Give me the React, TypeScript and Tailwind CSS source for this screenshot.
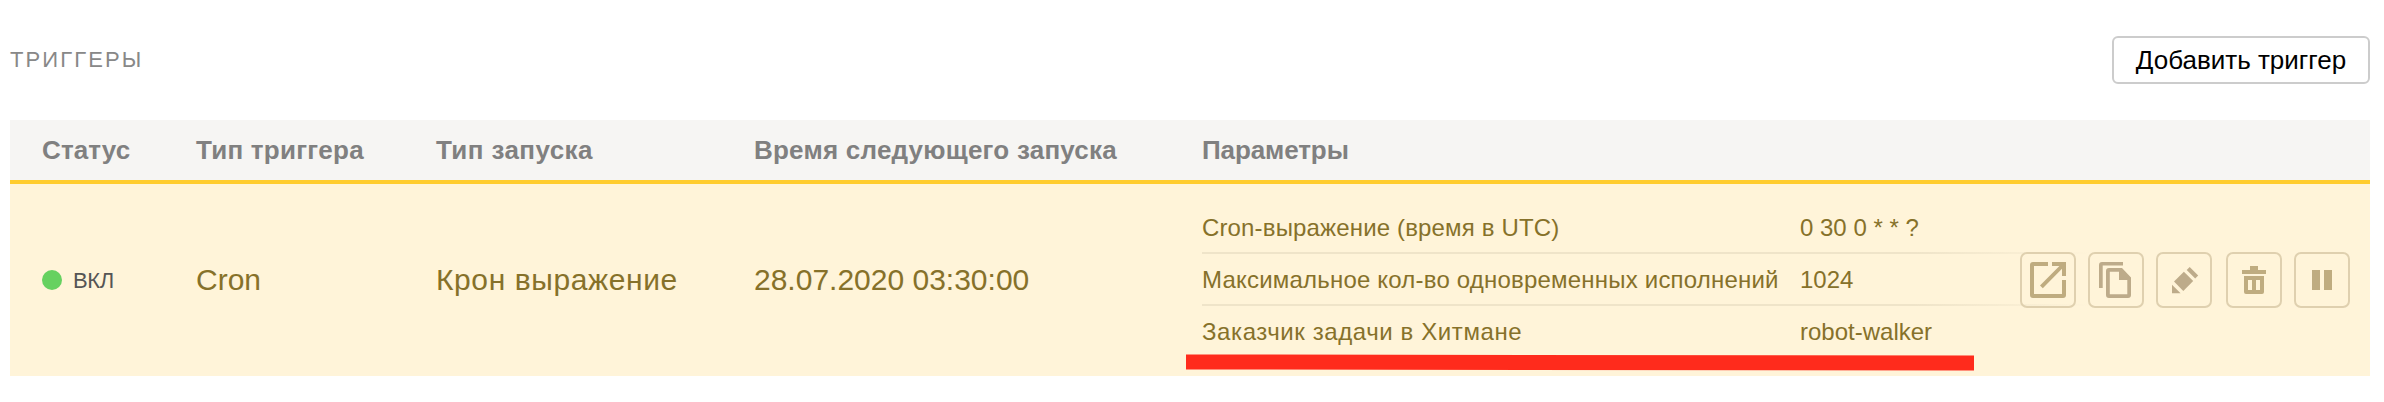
import type { ReactNode } from "react";

const columns = [
  { title: "Статус", className: "w-[154px] tracking-[0.1px]" },
  { title: "Тип триггера", className: "w-[240px] tracking-[0.25px]" },
  { title: "Тип запуска", className: "w-[318px] tracking-[0.42px]" },
  { title: "Время следующего запуска", className: "w-[448px] tracking-[0.23px]" },
  { title: "Параметры", className: "tracking-[-0.1px]" },
];

const params = [
  { name: "Cron-выражение (время в UTC)", value: "0 30 0 * * ?", className: "tracking-[0.15px]" },
  { name: "Максимальное кол-во одновременных исполнений", value: "1024", className: "tracking-[0.2px]" },
  { name: "Заказчик задачи в Хитмане", value: "robot-walker", className: "tracking-[0.6px]" },
];

function IconButton({ label, children }: { label: string; children: ReactNode }) {
  return (
    <button
      aria-label={label}
      className="flex size-14 items-center justify-center rounded-[7px] border-2 border-[#dfd0af] text-[#bfac80]"
    >
      <svg viewBox="0 0 56 56" className="size-14 shrink-0" fill="currentColor">
        {children}
      </svg>
    </button>
  );
}

export default function App() {
  return (
    <main className="h-[402px] bg-white pl-[10px] pr-[14px] pt-9 font-['Liberation_Sans',Arial,sans-serif]">
      <header className="flex h-12 items-center justify-between">
        <h2 className="text-[22px] leading-[48px] tracking-[2.1px] text-[#888]">ТРИГГЕРЫ</h2>
        <button className="h-12 w-[258px] rounded-md border-2 border-[#ccc] text-[26px] leading-[44px] text-black">
          Добавить триггер
        </button>
      </header>

      <section className="mt-9">
        <div className="flex h-16 items-center border-b-4 border-[#ffcc2e] bg-[#f6f5f3] pl-8 pt-px text-[26px] font-bold text-[#808080]">
          {columns.map((c) => (
            <div key={c.title} className={`shrink-0 whitespace-nowrap ${c.className}`}>
              {c.title}
            </div>
          ))}
        </div>

        <div className="relative flex h-48 items-center bg-[#fff4d9] pl-8 text-[30px] leading-[45px] text-[#86712a]">
          <div className="flex w-[154px] shrink-0 items-center gap-[11px]">
            <span className="size-5 rounded-full bg-[#66d160]" />
            <span className="text-[22px] leading-[33px] tracking-[-0.4px] text-[#555]">ВКЛ</span>
          </div>
          <div className="-mt-px w-[240px] shrink-0">Cron</div>
          <div className="-mt-px w-[318px] shrink-0 tracking-[0.6px]">Крон выражение</div>
          <div className="-mt-px w-[448px] shrink-0">28.07.2020 03:30:00</div>
          <div className="w-[890px] shrink-0 text-[24px]">
            {params.map((p, i) => (
              <div key={p.name}>
                <div className="flex h-[50px] whitespace-nowrap pt-px leading-[50px]">
                  <div className={`w-[598px] ${p.className}`}>{p.name}</div>
                  <div>{p.value}</div>
                </div>
                <div
                  className={
                    i < params.length - 1
                      ? "h-[2px] bg-linear-to-r from-[#efe4c9] from-80% to-[#efe4c9]/0"
                      : "h-[2px]"
                  }
                />
              </div>
            ))}
          </div>
          <div className="-ml-[72px] flex shrink-0 gap-3">
            <IconButton label="Открыть">
              <path d="M28 10H13a3 3 0 0 0-3 3v30a3 3 0 0 0 3 3h30a3 3 0 0 0 3-3V28h-4v14H14V14h14z" />
              <path d="M32 10h14v14h-4v-7.2L22.8 36.200 20 33.400 39.400 14H32z" />
            </IconButton>
            <IconButton label="Копировать">
              <g className="text-[#bdab8a]">
                <path d="M35 10H14a3 3 0 0 0-3 3v23h3.700V13.500H35z" />
                <path
                  fillRule="evenodd"
                  d="M21 16h13l9 9.500V43a3 3 0 0 1-3 3H21a3 3 0 0 1-3-3V19a3 3 0 0 1 3-3zM21.800 19.700v22.600h17.500V28H31v-8.300z"
                />
              </g>
            </IconButton>
            <IconButton label="Изменить">
              <g className="text-[#bdab8a]">
                <path d="M27.900 19.700l9.300 9.300-9.900 9.900-9.300-9.300z" />
                <path d="M33.700 15l8.500 8.500-3 3-8.500-8.500z" />
                <path d="M16 32.700l8.600 8.600H16z" />
              </g>
            </IconButton>
            <div className="ml-[2px]">
              <IconButton label="Удалить">
                <path d="M24 14h8v4h8v4H16v-4h8z" />
                <path
                  fillRule="evenodd"
                  d="M18 24h20v16a2 2 0 0 1-2 2H20a2 2 0 0 1-2-2zM22 28v10h4V28zM30 28v10h4V28z"
                />
              </IconButton>
            </div>
            <IconButton label="Приостановить">
              <path d="M18 18h8v20h-8zM30 18h8v20h-8z" />
            </IconButton>
          </div>
          <div className="absolute left-[1176px] top-[171px] h-[15px] w-[788px] rotate-[0.07deg] bg-[#ff2b1c]" />
        </div>
      </section>
    </main>
  );
}
